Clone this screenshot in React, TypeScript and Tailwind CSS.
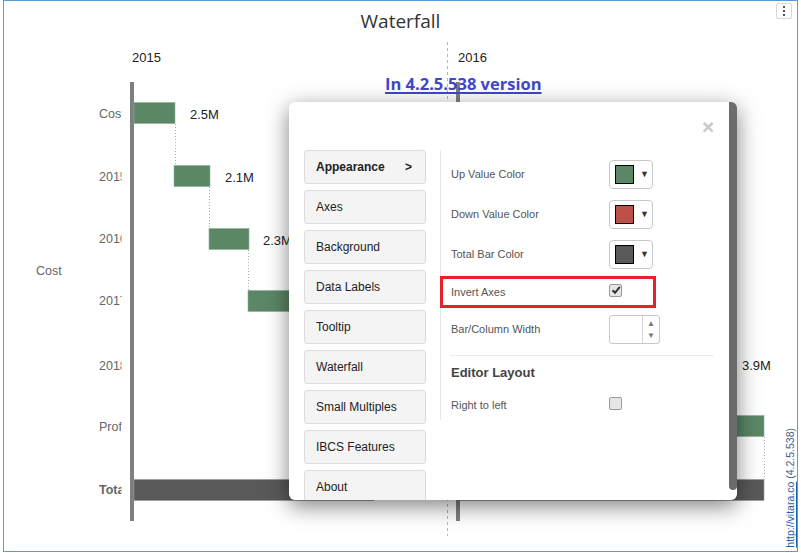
import React from "react";

const GREEN = "#5b8767";
const DARK = "#595959";

function Chart() {
  const cats = [
    { t: "Cost", y: 118, b: false },
    { t: "2015", y: 181, b: false },
    { t: "2016", y: 243, b: false },
    { t: "2017", y: 305, b: false },
    { t: "2018", y: 370, b: false },
    { t: "Profit", y: 431, b: false },
    { t: "Total", y: 494, b: true },
  ];
  return (
    <svg width="801" height="553" className="absolute left-0 top-0" style={{ fontFamily: '"Liberation Sans", Arial, sans-serif' }}>
      <defs>
        <clipPath id="catclip">
          <rect x="0" y="0" width="121.5" height="553" />
        </clipPath>
      </defs>
      <text x="132" y="62" fontSize="13" fill="#222">2015</text>
      <text x="458" y="62" fontSize="13" fill="#222">2016</text>
      <line x1="447.5" y1="42" x2="447.5" y2="536" stroke="#b5b5b5" strokeDasharray="3,3" />
      <text x="36" y="275" fontSize="12.5" fill="#666">Cost</text>
      <g clipPath="url(#catclip)">
        {cats.map((c) => (
          <text key={c.t} x="99" y={c.y} fontSize="12.5" fill="#666" fontWeight={c.b ? "bold" : "normal"}>
            {c.t}
          </text>
        ))}
      </g>
      <rect x="130" y="82" width="4" height="439" fill="#7f7f7f" />
      <rect x="456" y="82" width="4" height="439" fill="#7f7f7f" />
      <rect x="134" y="102.5" width="41" height="21" fill={GREEN} stroke="#8fb09a" strokeWidth="0.6" />
      <rect x="174" y="165.5" width="36" height="21" fill={GREEN} stroke="#8fb09a" strokeWidth="0.6" />
      <rect x="209" y="228.5" width="40" height="21" fill={GREEN} stroke="#8fb09a" strokeWidth="0.6" />
      <rect x="248" y="290.5" width="60" height="21" fill={GREEN} stroke="#8fb09a" strokeWidth="0.6" />
      <rect x="134" y="479.5" width="240" height="21" fill={DARK} stroke="#999" strokeWidth="0.6" />
      <line x1="175.5" y1="124" x2="175.5" y2="165" stroke="#aaa" strokeDasharray="1,2" />
      <line x1="209.5" y1="187" x2="209.5" y2="228" stroke="#aaa" strokeDasharray="1,2" />
      <line x1="248.5" y1="250" x2="248.5" y2="290" stroke="#aaa" strokeDasharray="1,2" />
      <text x="190" y="119" fontSize="13" fill="#222">2.5M</text>
      <text x="225" y="182" fontSize="13" fill="#222">2.1M</text>
      <text x="263" y="245" fontSize="13" fill="#222">2.3M</text>
      <rect x="460" y="102.5" width="50" height="21" fill={GREEN} />
      <rect x="600" y="415.5" width="164" height="21" fill={GREEN} stroke="#8fb09a" strokeWidth="0.6" />
      <rect x="460" y="479.5" width="304" height="21" fill={DARK} stroke="#999" strokeWidth="0.6" />
      <line x1="764.5" y1="437" x2="764.5" y2="479" stroke="#aaa" strokeDasharray="1,2" />
      <text x="742" y="370" fontSize="13" fill="#222">3.9M</text>
    </svg>
  );
}

function ColorPicker({ color }: { color: string }) {
  return (
    <div className="flex h-[29px] w-[44px] items-center rounded-[4px] border border-[#c8c8c8] bg-white pl-[5px]">
      <span className="h-[19px] w-[19px] border border-black" style={{ backgroundColor: color }} />
      <span className="ml-[6px] text-[9px] leading-none text-[#333]">▼</span>
    </div>
  );
}

function Checkbox({ checked }: { checked?: boolean }) {
  return (
    <span className="flex h-[13px] w-[13px] items-center justify-center rounded-[2px] border border-[#9a9a9a] bg-[#e6e6e6]">
      {checked && (
        <svg width="10" height="10" viewBox="0 0 10 10">
          <path d="M1.5 5.2 L4 7.8 L8.8 1.8" fill="none" stroke="#333" strokeWidth="2" />
        </svg>
      )}
    </span>
  );
}

const menu = ["Appearance", "Axes", "Background", "Data Labels", "Tooltip", "Waterfall", "Small Multiples", "IBCS Features", "About"];

function Dialog() {
  return (
    <div className="absolute left-[289px] top-[102px] h-[398px] w-[448px] overflow-hidden rounded-[6px] bg-white shadow-[0_6px_22px_rgba(0,0,0,0.5)]">
      <div className="absolute right-0 top-0 h-[388px] w-[8px] rounded-b-full rounded-tr-[6px] bg-[#6b6b6b]" />
      <div className="absolute left-[413px] top-[14px] text-[21px] font-bold leading-none text-[#c9c9c9]" style={{ fontFamily: '"Liberation Sans", Arial, sans-serif' }}>
        ×
      </div>
      <div className="flex pl-[15px] pt-[48px]" style={{ fontFamily: '"Liberation Sans", Arial, sans-serif' }}>
        <div className="flex w-[122px] flex-col gap-[6px]">
          {menu.map((m, i) => (
            <div
              key={m}
              className={`flex h-[34px] shrink-0 items-center justify-between rounded-[3px] border border-[#dcdcdc] bg-[#f4f4f4] pl-[11px] pr-[13px] text-[12px] text-[#222] ${i === 0 ? "font-bold" : ""}`}
            >
              <span>{m}</span>
              {i === 0 && <span>&gt;</span>}
            </div>
          ))}
        </div>
        <div className="ml-[14px] h-[270px] w-px bg-[#e6e6e6]" />
        <div className="flex w-[280px] flex-col pt-[10px] text-[11px] text-[#555]">
          {[
            ["Up Value Color", "#5b8767"],
            ["Down Value Color", "#bd5049"],
            ["Total Bar Color", "#595959"],
          ].map(([l, c]) => (
            <div key={l} className="flex h-[40px] items-start">
              <span className="w-[168px] pl-[10px] leading-[29px]">{l}</span>
              <ColorPicker color={c} />
            </div>
          ))}
          <div className="-ml-[1px] -mt-[4px] flex h-[32px] w-[216px] items-center border-[3px] border-[#e8202a]">
            <span className="w-[166px] pl-[8px] leading-none">Invert Axes</span>
            <span className="-mt-[4px]">
              <Checkbox checked />
            </span>
          </div>
          <div className="mt-[7px] flex h-[29px] items-center">
            <span className="w-[168px] pl-[10px]">Bar/Column Width</span>
            <div className="flex h-[29px] w-[51px] rounded-[3px] border border-[#c8c8c8]">
              <div className="w-[33px] border-r border-[#d6d6d6]" />
              <div className="flex flex-1 flex-col items-center justify-center gap-[4px] text-[8px] leading-none text-[#777]">
                <span>▲</span>
                <span>▼</span>
              </div>
            </div>
          </div>
          <div className="ml-[9px] mt-[11px] h-px w-[264px] bg-[#eaeaea]" />
          <div className="mt-[9px] pl-[10px] text-[13px] font-bold leading-[16px] text-[#444]">Editor Layout</div>
          <div className="mt-[16px] flex items-center">
            <span className="w-[168px] pl-[10px]">Right to left</span>
            <span className="-mt-[4px]">
              <Checkbox />
            </span>
          </div>
        </div>
      </div>
    </div>
  );
}

export default function App() {
  return (
    <div className="relative h-[553px] w-[801px] overflow-hidden bg-white">
      <div className="absolute left-[3px] top-0 h-[552px] w-[795px] border border-[#5b9bd5]" />
      <Chart />
      <div
        className="absolute left-0 top-[9px] w-[801px] text-center text-[19px] leading-[24px] text-[#333]"
        style={{ fontFamily: '"Open Sans", sans-serif' }}
      >
        Waterfall
      </div>
      <div className="absolute right-[9px] top-[3px] flex h-[16px] w-[16px] flex-col items-center justify-center gap-[2px] rounded-[2px] border border-[#dadada] bg-white">
        <span className="h-[2px] w-[2px] bg-[#555]" />
        <span className="h-[2px] w-[2px] bg-[#555]" />
        <span className="h-[2px] w-[2px] bg-[#555]" />
      </div>
      <a
        className="absolute left-[385px] top-[73px] text-[16.5px] font-bold leading-[22px] text-[#3f48cc] underline decoration-2 underline-offset-2"
        style={{ fontFamily: '"Open Sans", sans-serif' }}
      >
        In 4.2.5.538 version
      </a>
      <Dialog />
      <div
        className="absolute bottom-[5px] left-[784px] rotate-180 text-[10.5px] leading-[13px] text-[#1f5fb0] [writing-mode:vertical-rl]"
        style={{ fontFamily: '"Liberation Sans", Arial, sans-serif' }}
      >
        <span className="underline">http://vitara.co</span>
        <span className="text-[#445d80]"> (4.2.5.538)</span>
      </div>
    </div>
  );
}
